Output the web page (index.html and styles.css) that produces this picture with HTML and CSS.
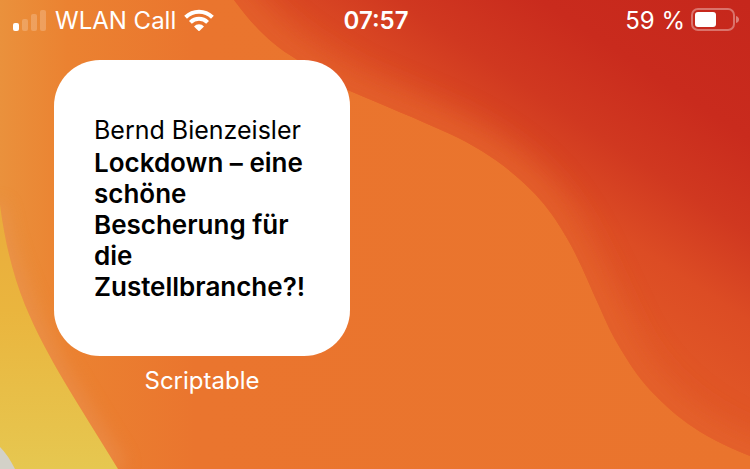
FILE: index.html
```html
<!DOCTYPE html>
<html lang="de">
<head>
<meta charset="utf-8">
<meta name="viewport" content="width=device-width, initial-scale=1">
<title>Home</title>
<link rel="stylesheet" href="styles.css">
</head>
<body>
<svg class="wallpaper" viewBox="0 0 750 469" preserveAspectRatio="none" aria-hidden="true">
  <defs>
    <linearGradient id="orange" x1="0" y1="0" x2="1" y2="0">
      <stop offset="0" stop-color="#ea913c"/>
      <stop offset="0.09" stop-color="#eb8231"/>
      <stop offset="0.26" stop-color="#ea752e"/>
      <stop offset="1" stop-color="#ea742d"/>
    </linearGradient>
    <linearGradient id="yellow" x1="0" y1="0" x2="0" y2="1">
      <stop offset="0" stop-color="#eaac3c"/>
      <stop offset="0.4" stop-color="#eab53e"/>
      <stop offset="1" stop-color="#e6c750"/>
    </linearGradient>
    <linearGradient id="red" gradientUnits="userSpaceOnUse" x1="145" y1="0" x2="328" y2="-276">
      <stop offset="0" stop-color="#e05526"/>
      <stop offset="0.2" stop-color="#dc4c24"/>
      <stop offset="0.42" stop-color="#d03820"/>
      <stop offset="0.66" stop-color="#c92b1d"/>
      <stop offset="1" stop-color="#c6271c"/>
    </linearGradient>
    <filter id="soft" x="-20%" y="-20%" width="140%" height="140%"><feGaussianBlur stdDeviation="16"/></filter>
    <filter id="glow" x="-50%" y="-30%" width="200%" height="160%"><feGaussianBlur stdDeviation="9"/></filter>
    <clipPath id="redClip"><path d="M234 0C254 27 272 45 296 59C314 71 330 82 350 91C385 106 415 118 450 134C485 150 513 171 535 194C548 208 557 221 565 235C580 260 588 282 600 308C606 322 612 335 620 348C629 363 638 377 650 390C672 413 696 435 750 456V0Z"/></clipPath>
    <clipPath id="orangeClip"><path d="M0 205C5 243 13 275 25 305C47 358 76 400 118 469H750V0H0Z"/></clipPath>
  </defs>
  <rect width="750" height="469" fill="url(#orange)"/>
  <g clip-path="url(#redClip)">
    <rect width="750" height="469" fill="url(#red)"/>
    <path d="M200 -60L234 0C272 45 296 59 350 91C385 106 415 118 450 134C485 150 535 180 565 235C580 260 600 308 620 348C650 400 696 435 750 456L800 470" fill="none" stroke="#e6672e" stroke-width="34" opacity="0.8" filter="url(#soft)"/>
  </g>
  <g clip-path="url(#orangeClip)">
    <path d="M-5 205C0 243 13 275 25 305C47 358 76 400 118 469" fill="none" stroke="#ea965b" stroke-width="18" opacity="0.5" filter="url(#glow)"/>
  </g>
  <path d="M0 205C5 243 13 275 25 305C47 358 76 400 118 469H0Z" fill="url(#yellow)"/>
  <path d="M0 447Q8 455 15 469H0Z" fill="#d3d1c8"/>
</svg>

<header class="status">
  <div class="status-group">
    <svg class="signal" viewBox="0 0 34 22" aria-hidden="true">
      <rect x="0" y="14" width="6" height="8" rx="2"/>
      <g opacity="0.2">
        <rect x="9" y="10" width="6" height="12" rx="2"/>
        <rect x="18" y="5" width="6" height="17" rx="2"/>
        <rect x="27" y="1" width="6" height="21" rx="2"/>
      </g>
    </svg>
    <span>WLAN Call</span>
    <svg class="wifi" viewBox="0 0 30 22" aria-hidden="true">
      <g fill="none" stroke="#fff" stroke-width="4">
        <path d="M1.600 8.200A19.200 19.200 0 0 1 28.400 8.200"/>
        <path d="M6.400 13.300A12.200 12.200 0 0 1 23.600 13.300"/>
      </g>
      <path d="M10 17.400A7 7 0 0 1 20 17.400L15.700 21.700Q15 22.300 14.300 21.700Z"/>
    </svg>
  </div>
  <time class="clock">07:57</time>
  <div class="status-group status-end">
    <span>59 %</span>
    <svg class="battery" viewBox="0 0 48 24" aria-hidden="true">
      <rect x="1" y="1" width="42" height="21" rx="6" fill="none" stroke="#fff" stroke-width="2" opacity="0.35"/>
      <rect x="4" y="4" width="21" height="15" rx="3"/>
      <path d="M45 8Q48 9 48 11.500T45 15Z" opacity="0.4"/>
    </svg>
  </div>
</header>

<main class="home">
  <figure class="widget">
    <article class="card">
      <p class="author">Bernd Bienzeisler</p>
      <h1 class="title">Lockdown – eine schöne Bescherung für die Zustellbranche?!</h1>
    </article>
    <figcaption class="caption">Scriptable</figcaption>
  </figure>
</main>
</body>
</html>
```
FILE: styles.css
```css
* {
  box-sizing: border-box;
  margin: 0;
}

body {
  position: relative;
  min-height: 100vh;
  overflow-x: hidden;
  background: #ea752e;
  color: #fff;
  font-family: Inter, "Liberation Sans", sans-serif;
  font-size: 24px;
  line-height: 31px;
}

svg {
  display: block;
  flex: none;
  fill: #fff;
}

.wallpaper {
  position: absolute;
  inset: 0;
  z-index: -1;
  width: 100%;
  height: 100%;
}

.status {
  display: grid;
  grid-template-columns: 1fr auto 1fr;
  align-items: center;
  height: 40px;
  padding: 0 11px 0 13px;
}

.status-group {
  display: flex;
  align-items: center;
  gap: 8px;
}

.status-end {
  justify-content: flex-end;
  gap: 6px;
}

.signal {
  width: 34px;
  height: 22px;
}

.wifi {
  width: 30px;
  height: 22px;
}

.battery {
  width: 48px;
  height: 24px;
}

.clock {
  font-weight: 600;
}

.home {
  padding: 20px 54px;
}

.widget {
  width: 296px;
}

.card {
  display: flex;
  flex-direction: column;
  justify-content: center;
  gap: 1px;
  aspect-ratio: 1;
  padding: 0 40px;
  border-radius: 46px;
  background: #fff;
  color: #000;
}

.author {
  font-size: 25px;
}

.title {
  font-size: 26px;
  font-weight: 600;
}

.caption {
  padding-top: 9px;
  text-align: center;
}
```
